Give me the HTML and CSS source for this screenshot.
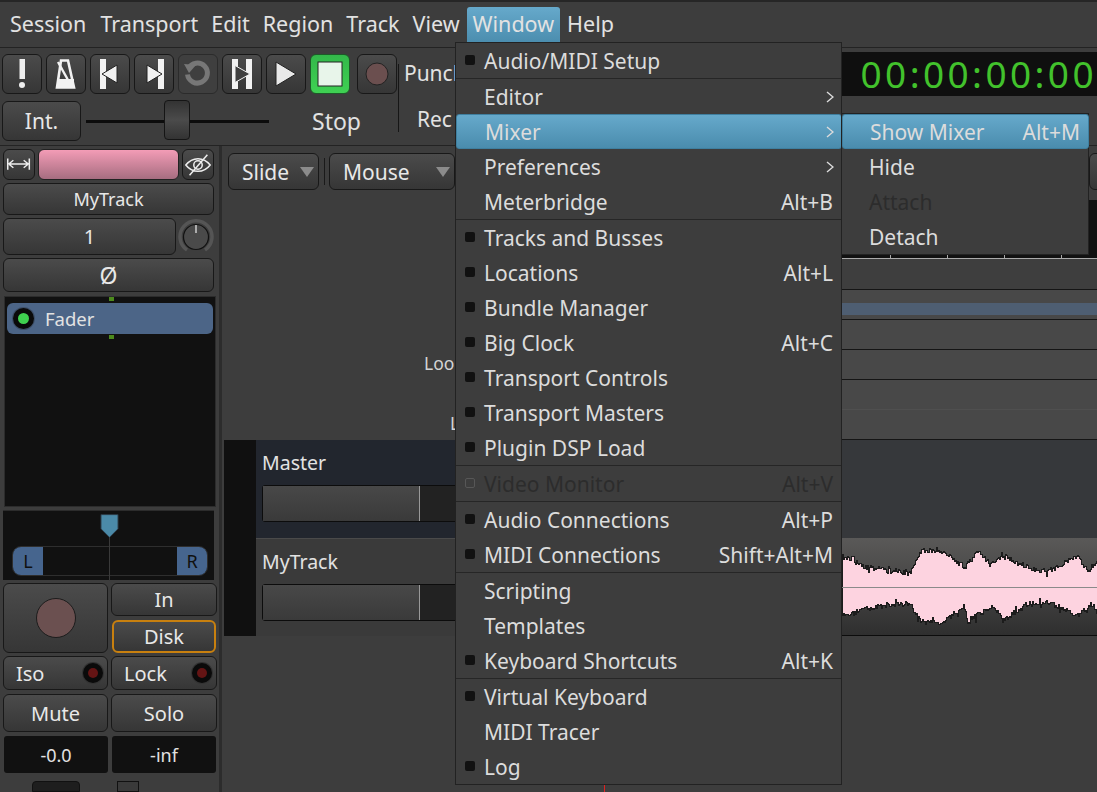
FILE: index.html
```html
<!DOCTYPE html>
<html lang="en">
<head>
  <meta charset="UTF-8" />
  <title>Ardour</title>
  <link rel="stylesheet" href="styles.css">
</head>
<body>
  <div class="app">
    <nav class="menubar">
      <span class="mb-item">Session</span>
      <span class="mb-item">Transport</span>
      <span class="mb-item">Edit</span>
      <span class="mb-item">Region</span>
      <span class="mb-item">Track</span>
      <span class="mb-item">View</span>
      <span class="mb-item mb-open">Window</span>
      <span class="mb-item">Help</span>
    </nav>

    <header class="toolbar">
      <div class="transport">
        <div class="tp-row">
          <button class="btn tp"><svg viewBox="0 0 40 40"><rect x="17.5" y="5" width="5.5" height="20" fill="#eee"/><circle cx="20" cy="31" r="3" fill="#eee"/></svg></button>
          <button class="btn tp"><svg viewBox="0 0 40 40"><path d="M15 6.5h7l6 27H11z" fill="none" stroke="#f2f2f2" stroke-width="2.6"/><path d="M12 25h16v9H11z" fill="#f2f2f2"/><path d="M12 8l10 18" stroke="#f2f2f2" stroke-width="2.4"/></svg></button>
          <button class="btn tp"><svg viewBox="0 0 40 40"><rect x="10" y="5" width="6" height="30" fill="#f2f2f2"/><path d="M12 20l15-9v18z" fill="#f2f2f2" stroke="#222"/></svg></button>
          <button class="btn tp"><svg viewBox="0 0 40 40"><rect x="24" y="5" width="6" height="30" fill="#f2f2f2"/><path d="M28 20l-15-9v18z" fill="#f2f2f2" stroke="#222"/></svg></button>
          <button class="btn tp tp-off"><svg viewBox="0 0 40 40"><path d="M10.5 14.5a10 10 0 1 1-1 6" fill="none" stroke="#777" stroke-width="5"/><path d="M6 10l12 1-7 8z" fill="#777"/></svg></button>
          <button class="btn tp"><svg viewBox="0 0 40 40"><rect x="10" y="5" width="6" height="30" fill="#f2f2f2"/><rect x="24" y="5" width="6" height="30" fill="#f2f2f2"/><path d="M13 11.5l15 8.5-15 8.5z" fill="#3f3f3f" stroke="#f2f2f2"/></svg></button>
          <button class="btn tp"><svg viewBox="0 0 40 40"><path d="M10 8l20 12-20 12z" fill="#e9e9e9" stroke="#222"/></svg></button>
          <button class="btn tp tp-stop"><svg viewBox="0 0 40 40"><rect x="8" y="8" width="24" height="24" fill="#e8f5ea" stroke="#222"/></svg></button>
          <button class="btn tp tp-rec"><svg viewBox="0 0 40 40"><circle cx="20" cy="20" r="11" fill="#6b4f4f" stroke="#222"/></svg></button>
        </div>
        <div class="tp-row tp-row2">
          <button class="btn int">Int.</button>
          <div class="slider"><span class="slider-thumb"></span></div>
          <span class="tp-state">Stop</span>
        </div>
      </div>
      <div class="vsep"></div>
      <div class="punch">
        <span class="punch-a">Punch</span>
        <span class="punch-b">Rec</span>
      </div>
      <div class="clock-wrap">
        <div class="clock">00:00:00:00</div>
      </div>
    </header>

    <main class="workspace">
      <aside class="strip">
        <div class="st-row st-r1">
          <button class="btn st-ic"><svg viewBox="0 0 32 31"><path d="M4 9v12M27 9v12M5 15h21M5 15l5-4M5 15l5 4M26 15l-5-4M26 15l-5 4" fill="none" stroke="#eee" stroke-width="1.6"/></svg></button>
          <div class="st-colour"></div>
          <button class="btn st-ic"><svg viewBox="0 0 32 31"><path d="M3 16c7-9 19-9 26 0-7 9-19 9-26 0z" fill="none" stroke="#eee" stroke-width="1.6"/><circle cx="16" cy="16" r="4.5" fill="none" stroke="#eee" stroke-width="1.6"/><path d="M7 27L26 5" stroke="#eee" stroke-width="1.6"/></svg></button>
        </div>
        <button class="btn st-name">MyTrack</button>
        <div class="st-row st-r3">
          <button class="btn st-in">1</button>
          <svg class="knob" viewBox="0 0 36 36"><path d="M9 31A16 16 0 1 1 27 31" fill="none" stroke="#555" stroke-width="3.5"/><circle cx="18" cy="18" r="12.5" fill="#4a4a4a" stroke="#111" stroke-width="1.2"/><path d="M18 6v8" stroke="#eee" stroke-width="1.2"/></svg>
        </div>
        <button class="btn st-phase">Ø</button>
        <div class="proc">
          <span class="pin pin-top"></span>
          <div class="proc-fader"><span class="led led-on"></span>Fader</div>
          <span class="pin pin-bottom"></span>
        </div>
        <div class="pan">
          <svg class="pan-ptr" viewBox="0 0 20 26"><path d="M1 1h18v15l-9 9-9-9z" fill="#4b8aa8" stroke="#2a3640"/></svg>
          <div class="pan-bar"><span class="pan-l">L</span><span class="pan-r">R</span></div>
        </div>
        <div class="st-rec">
          <button class="btn rec-big"><span class="rec-dot"></span></button>
          <div class="rec-side">
            <button class="btn rec-in">In</button>
            <button class="btn rec-disk">Disk</button>
          </div>
        </div>
        <div class="st-cols st-iso">
          <button class="btn iso">Iso<span class="led led-red"></span></button>
          <button class="btn iso">Lock<span class="led led-red"></span></button>
        </div>
        <div class="st-cols st-mute">
          <button class="btn">Mute</button>
          <button class="btn">Solo</button>
        </div>
        <div class="st-cols st-peak">
          <div class="peak">-0.0</div>
          <div class="peak">-inf</div>
        </div>
        <div class="st-foot"><span class="foot-a"></span><span class="foot-b"></span></div>
      </aside>

      <section class="editor">
        <div class="edit-bar">
          <button class="btn drop drop-slide">Slide<i class="caret"></i></button>
          <span class="edit-sep"></span>
          <button class="btn drop drop-mouse">Mouse<i class="caret"></i></button>
          <button class="btn edit-end"></button>
        </div>
        <div class="rulers">
          <div class="ruler-labels">
            <span class="rl-a">Loop/Punch Ranges</span>
            <span class="rl-b">Location Markers</span>
          </div>
          <div class="ruler-canvas">
            <div class="rc-time"><span>:00</span></div>
            <div class="rc-ticks"></div>
            <div class="rc-lane rc-lane1"></div>
            <div class="rc-lane"><span class="rc-band"></span></div>
            <div class="rc-lane"></div>
            <div class="rc-lane"></div>
            <div class="rc-lane rc-soft"></div>
            <div class="rc-lane"></div>
          </div>
        </div>
        <div class="tracks">
          <div class="tr-side"></div>
          <div class="tr-rows">
            <div class="track track-master">
              <div class="tr-head"><div class="tr-name">Master</div><div class="tr-fader"><span></span></div></div>
              <div class="tr-lane"></div>
            </div>
            <div class="track track-audio">
              <div class="tr-head"><div class="tr-name">MyTrack</div><div class="tr-fader"><span></span></div></div>
              <div class="tr-lane tr-wave">
                <svg id="wave" width="255" height="98" viewBox="0 0 255 98" shape-rendering="crispEdges">
                  <path id="wave-fill" fill="#fdd3e0" stroke="#1c1c1c"/>
                  <path d="M0 49.5h255" stroke="#8a8a8a"/>
                </svg>
              </div>
            </div>
          </div>
        </div>
      </section>
    </main>
  </div>

  <!-- open menus -->
  <div class="menu menu-window">
    <div class="mi"><i class="chk"></i><span>Audio/MIDI Setup</span></div>
    <hr>
    <div class="mi"><span>Editor</span><svg class="chev" viewBox="0 0 8 12"><path d="M1 1l6 5-6 5"/></svg></div>
    <div class="mi mi-on"><span>Mixer</span><svg class="chev" viewBox="0 0 8 12"><path d="M1 1l6 5-6 5"/></svg></div>
    <div class="mi"><span>Preferences</span><svg class="chev" viewBox="0 0 8 12"><path d="M1 1l6 5-6 5"/></svg></div>
    <div class="mi"><span>Meterbridge</span><b>Alt+B</b></div>
    <hr>
    <div class="mi"><i class="chk"></i><span>Tracks and Busses</span></div>
    <div class="mi"><i class="chk"></i><span>Locations</span><b>Alt+L</b></div>
    <div class="mi"><i class="chk"></i><span>Bundle Manager</span></div>
    <div class="mi"><i class="chk"></i><span>Big Clock</span><b>Alt+C</b></div>
    <div class="mi"><i class="chk"></i><span>Transport Controls</span></div>
    <div class="mi"><i class="chk"></i><span>Transport Masters</span></div>
    <div class="mi"><i class="chk"></i><span>Plugin DSP Load</span></div>
    <hr>
    <div class="mi mi-off"><i class="chk chk-off"></i><span>Video Monitor</span><b>Alt+V</b></div>
    <hr>
    <div class="mi"><i class="chk"></i><span>Audio Connections</span><b>Alt+P</b></div>
    <div class="mi"><i class="chk"></i><span>MIDI Connections</span><b>Shift+Alt+M</b></div>
    <hr>
    <div class="mi"><span>Scripting</span></div>
    <div class="mi"><span>Templates</span></div>
    <div class="mi"><i class="chk"></i><span>Keyboard Shortcuts</span><b>Alt+K</b></div>
    <hr>
    <div class="mi"><i class="chk"></i><span>Virtual Keyboard</span></div>
    <div class="mi"><span>MIDI Tracer</span></div>
    <div class="mi"><i class="chk"></i><span>Log</span></div>
  </div>

  <div class="menu menu-mixer">
    <div class="mi mi-on"><span>Show Mixer</span><b>Alt+M</b></div>
    <div class="mi"><span>Hide</span></div>
    <div class="mi mi-off"><span>Attach</span></div>
    <div class="mi"><span>Detach</span></div>
  </div>

  <span class="playhead"></span>

  <script src="waveform.js"></script>
</body>
</html>
```
FILE: styles.css
```css
* { box-sizing: border-box; }
html, body { margin: 0; height: 100%; }
body {
  width: 1097px;
  height: 792px;
  overflow: hidden;
  position: relative;
  background: #3d3d3d;
  color: #e2e2e2;
  font-family: "Noto Sans", "Open Sans", sans-serif;
  font-size: 21px;
}
.app { display: flex; flex-direction: column; height: 792px; border-top: 2px solid #262626; }

.btn {
  display: flex;
  align-items: center;
  justify-content: center;
  padding: 0;
  color: #e8e8e8;
  font: inherit;
  background: linear-gradient(#4b4b4b, #363636);
  border: 1px solid #181818;
  border-radius: 6px;
}

/* menu bar */
.menubar {
  display: flex;
  height: 46px;
  padding-left: 4px;
  padding-top: 5px;
  border-bottom: 1px solid #232323;
  font-size: 21.5px;
  gap: 1px;
}
.mb-item { height: 36px; padding: 0 6px; line-height: 34px; }
.mb-item:nth-child(2) { margin-left: 1px; }
.mb-open {
  margin-left: 0;
  background: linear-gradient(#66a9cb, #4a8cad);
  border-radius: 3px 3px 0 0;
  height: 37px;
}

/* toolbar */
.toolbar { display: flex; height: 98px; border-bottom: 1px solid #232323; }
.transport { width: 400px; padding: 6px 0 0 2px; }
.tp-row { display: flex; gap: 4px; height: 40px; }
.tp-row2 { margin-top: 7px; align-items: center; gap: 0; }
.tp { width: 40px; height: 40px; }
.tp svg { width: 40px; height: 40px; flex: none; }
.tp-off { background: #3f3f3f; border-color: #2b2b2b; }
.tp-stop { background: linear-gradient(#33b84a, #3fd153); border-color: #1d5a28; }
.tp-rec { margin-left: 3px; }
.int { width: 79px; height: 40px; }
.slider {
  position: relative;
  width: 183px;
  height: 3px;
  margin-left: 5px;
  background: #0c0c0c;
}
.slider-thumb {
  position: absolute;
  left: 78px;
  top: -20px;
  width: 26px;
  height: 40px;
  background: linear-gradient(#333, #4b4b4b 50%, #333);
  border: 1px solid #151515;
  border-radius: 4px;
}
.tp-state { margin-left: 43px; font-size: 23px; }
.vsep { width: 1px; height: 68px; margin: 16px 0 0 1px; background: #161616; }
.punch { width: 439px; position: relative; padding-left: 5px; font-size: 21px; }
.punch-a { display: block; margin-top: 11px; }
.punch-b { display: block; margin: 18px 0 0 13px; }
.clock-wrap { flex: 1; padding-top: 4px; }
.clock {
  height: 44px;
  margin-left: 5px;
  padding-left: 54px;
  background: #0f0f0f;
  border-radius: 6px 0 0 6px;
  color: #42c22c;
  font-size: 37px;
  line-height: 44px;
  letter-spacing: 3.4px;
  white-space: nowrap;
  overflow: hidden;
}

/* main area */
.workspace { display: flex; flex: 1; min-height: 0; }

.strip {
  width: 222px;
  padding: 3px 5px 0 3px;
  border-right: 3px solid #2c2c2c;
  font-size: 20px;
  flex: none;
}
.st-row { display: flex; }
.st-r1 { height: 31px; gap: 3px; }
.st-ic { width: 32px; flex: none; }
.st-ic svg { width: 32px; height: 31px; }
.st-colour {
  flex: 1;
  border-radius: 6px;
  border: 1px solid #222;
  background: linear-gradient(#f39cb6, #a66d80);
}
.st-name { width: 100%; height: 32px; margin-top: 3px; font-size: 18px; }
.st-r3 { height: 37px; margin-top: 3px; align-items: center; justify-content: space-between; }
.st-in { width: 173px; height: 37px; }
.knob { width: 36px; height: 36px; margin-right: 0; }
.st-phase { width: 100%; height: 34px; margin-top: 3px; font-size: 23px; }

.proc {
  position: relative;
  height: 211px;
  margin: 4px 0 0 1px;
  width: 212px;
  padding: 6px 2px 0;
  background: #111;
  border: 1px solid #2c2c2c;
}
.pin { position: absolute; left: 104px; width: 5px; height: 4px; background: #4c8a1d; }
.pin-top { top: 0; }
.pin-bottom { top: 38px; }
.proc-fader {
  display: flex;
  align-items: center;
  height: 31px;
  padding-left: 6px;
  gap: 11px;
  font-size: 18.5px;
  background: #4c6587;
  border-radius: 6px;
}
.led { display: inline-block; width: 20px; height: 20px; border-radius: 50%; background: #0a0a0a; position: relative; flex: none; }
.led::after { content: ""; position: absolute; inset: 5px; border-radius: 50%; }
.led-on { width: 21px; height: 21px; box-shadow: 0 0 0 1px #3d4f68; }
.led-on::after { background: #3fd04f; }
.led-red { position: absolute; right: 4px; top: 6px; box-shadow: 0 0 0 1px #333; }
.led-red::after { background: #641414; }

.pan {
  position: relative;
  height: 70px;
  margin-top: 3px;
  background: #111;
  border-top: 1px solid #2c2c2c;
}
.pan::after { content: ""; position: absolute; left: 106px; top: 26px; width: 1px; height: 44px; background: #3a3a3a; }
.pan-ptr { position: absolute; left: 97px; top: 2px; width: 19px; height: 26px; z-index: 1; }
.pan-bar {
  display: flex;
  justify-content: space-between;
  position: absolute;
  left: 9px;
  top: 35px;
  width: 196px;
  height: 30px;
  border: 1px solid #2e2e2e;
  border-radius: 9px;
  overflow: hidden;
  font-size: 18px;
  color: #101010;
  line-height: 28px;
  text-align: center;
}
.pan-l, .pan-r { width: 30px; background: #46658e; }

.st-rec { display: grid; grid-template-columns: 105px 106px; gap: 3px; height: 70px; margin-top: 3px; }
.rec-big { height: 70px; }
.rec-dot { width: 40px; height: 40px; border-radius: 50%; background: #6b5050; border: 1px solid #1c1c1c; }
.rec-side { display: flex; flex-direction: column; align-items: center; }
.rec-in { width: 106px; height: 33px; }
.rec-disk { width: 104px; height: 33px; margin-top: 4px; border: 2px solid #c8800f; }
.st-cols { display: grid; grid-template-columns: 105px 106px; gap: 3px; }
.st-iso { height: 34px; margin-top: 3px; }
.iso { position: relative; justify-content: flex-start; padding-left: 12px; }
.st-mute { height: 38px; margin-top: 4px; }
.st-peak { height: 37px; margin-top: 4px; padding-left: 1px; grid-template-columns: 104px 104px; gap: 4px; }
.peak {
  display: flex;
  align-items: center;
  justify-content: center;
  background: #111;
  border-radius: 3px;
  font-size: 18px;
}
.st-foot { position: relative; height: 11px; margin-top: 8px; }
.foot-a { position: absolute; left: 29px; top: 0; width: 48px; height: 11px; background: #1e1e1e; border: 1px solid #111; border-radius: 4px 4px 0 0; }
.foot-b { position: absolute; left: 114px; top: 0; width: 22px; height: 11px; background: #3a3a3a; border: 1px solid #111; }

.editor { flex: 1; min-width: 0; display: flex; flex-direction: column; }
.edit-bar { display: flex; align-items: flex-start; height: 54px; padding: 7px 0 0 6px; }
.drop { height: 37px; justify-content: flex-start; padding-left: 13px; position: relative; }
.drop-slide { width: 91px; }
.drop-mouse { width: 126px; }
.caret {
  position: absolute;
  right: 4px;
  top: 13px;
  border: 7px solid transparent;
  border-top: 10px solid #8b8b8b;
  border-bottom: 0;
}
.edit-sep { width: 1px; height: 27px; margin: 5px 4px 0 5px; background: #1a1a1a; }
.edit-end { width: 20px; height: 37px; margin-left: auto; margin-right: -12px; }

.rulers { display: flex; height: 240px; }
.ruler-labels {
  position: relative;
  flex: none;
  width: 368px;
  font-size: 17.5px;
  color: #d4d4d4;
}
.rl-a, .rl-b { position: absolute; white-space: nowrap; }
.rl-a { left: 202px; top: 151px; }
.rl-b { left: 228px; top: 211px; }
.ruler-canvas { flex: 1; display: flex; flex-direction: column; }
.rc-time { height: 47px; background: #111; font-size: 16px; padding: 5px 0 0 246px; color: #aaa; overflow: hidden; white-space: nowrap; }
.rc-ticks {
  height: 11px;
  background: repeating-linear-gradient(90deg, #111 0 56px, #aaa 56px 57px);
  background-position-x: 16px;
  border-bottom: 0;
}
.rc-lane { position: relative; flex: none; height: 30px; background: #484848; border-bottom: 1px solid #151515; }
.rc-lane1 { height: 32px; background: #3e3e3e; border-top: 1px solid #aaa; }
.rc-soft { border-bottom-color: #4f4f4f; height: 30px; }
.rc-band { position: absolute; left: 0; right: 0; top: 13px; height: 12px; background: #4e5e72; }

.tracks { display: flex; padding-left: 2px; height: 196px; }
.tr-side { width: 32px; flex: none; background: #101010; }
.tr-rows { flex: 1; display: flex; flex-direction: column; min-width: 0; }
.track { display: flex; }
.track-master { height: 98px; }
.track-audio { height: 98px; }
.tr-head { width: 334px; flex: none; padding: 9px 0 0 6px; font-size: 19.5px; }
.track-master .tr-head { background: #22262e; }
.track-audio .tr-head { background: #3a3a3a; border-top: 1px solid #4a4a4a; }
.tr-name { height: 36px; line-height: 27px; }
.tr-fader {
  position: relative;
  width: 300px;
  height: 37px;
  background: #222;
  border: 1px solid #0c0c0c;
  border-radius: 3px;
}
.tr-fader span {
  display: block;
  width: 157px;
  height: 35px;
  background: linear-gradient(#484848, #3a3a3a);
  border-right: 1px solid #999;
}
.tr-lane { flex: 1; }
.track-master .tr-lane { background: #36383b; }
.tr-wave {
  display: flex;
  justify-content: flex-end;
  background: linear-gradient(#5a5958, #2f2f2f);
  border-bottom: 1px solid #0c0c0c;
}
#wave { display: block; flex: none; }

/* menus */
.menu {
  position: absolute;
  background: #3d3d3d;
  border: 1px solid #222;
  font-size: 21px;
  color: #dcdcdc;
}
.menu-window { left: 455px; top: 42px; width: 387px; }
.menu-mixer { left: 841px; top: 113px; width: 248px; }
.menu hr { height: 1px; margin: 0; border: 0; background: #262626; }
.mi {
  display: flex;
  align-items: center;
  justify-content: space-between;
  position: relative;
  height: 35px;
  padding: 0 8px 0 28px;
  white-space: nowrap;
}
.menu-mixer .mi { padding-left: 27px; }
.mi b { font-weight: 400; }
.mi-on {
  background: linear-gradient(#66a9cb, #4a8cad);
  border: 1px solid #3f7f9f;
  border-radius: 3px;
  margin: 0 -1px 0 0;
}
.mi-off { color: #2c2c2c; }
.chk { position: absolute; left: 9px; top: 12px; width: 10px; height: 10px; background: #111; border-radius: 2px; }
.chk-off { background: none; border: 1px solid #575757; }
.chev { width: 8px; height: 12px; fill: none; stroke: #dcdcdc; stroke-width: 1.4; margin-right: -1px; }
.playhead { position: absolute; left: 604px; top: 785px; width: 1px; height: 7px; background: #e02020; }
```
FILE: waveform.js
```js
// top and bottom outline of the clip, as [x, y] pairs
var top_env = [[0,18],[21,28],[45,32],[68,35],[78,13],[101,12],[121,30],[135,13],[148,26],[161,18],[188,30],[205,33],[235,18],[245,33],[255,22]];
var bot_env = [[0,78],[21,71],[48,66],[68,66],[78,83],[98,85],[121,68],[125,83],[148,68],[161,81],[185,66],[205,63],[235,78],[248,65],[255,76]];

var seed = 29;
function rnd() {
  seed = (seed * 16807) % 2147483647;
  return seed / 2147483647;
}

function envAt(env, x) {
  for (var i = 1; i < env.length; i++) {
    if (x <= env[i][0]) {
      var a = env[i - 1], b = env[i];
      return a[1] + (b[1] - a[1]) * (x - a[0]) / (b[0] - a[0]);
    }
  }
  return env[env.length - 1][1];
}

function jitter() {
  var n = (rnd() - 0.5) * 5;
  if (rnd() > 0.88) n *= 2.4;
  return n;
}

var d = "M0 49";
for (var x = 0; x < 255; x++) {
  d += "V" + Math.round(envAt(top_env, x) + jitter()) + "h1";
}
for (var x = 254; x >= 0; x--) {
  d += "V" + Math.round(envAt(bot_env, x) + jitter()) + "h-1";
}
document.getElementById("wave-fill").setAttribute("d", d + "V49z");
```
